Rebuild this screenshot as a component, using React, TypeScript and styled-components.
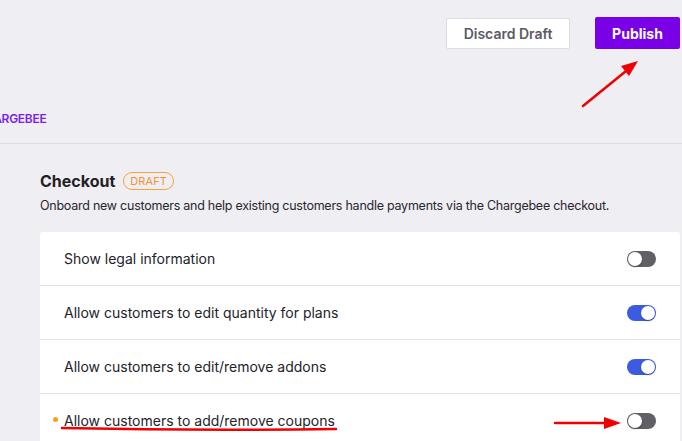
import React, { useState } from 'react';
import styled, { createGlobalStyle } from 'styled-components';

const GlobalStyle = createGlobalStyle`
  html, body {
    margin: 0;
    padding: 0;
    background: #efeef3;
    font-family: Inter, "Open Sans", "Liberation Sans", sans-serif;
    color: #1f1f24;
    overflow: hidden;
  }
`;

interface iSetting {
  label: string;
  on: boolean;
  changed?: boolean;
}

const settings: iSetting[] = [
  { label: 'Show legal information', on: false },
  { label: 'Allow customers to edit quantity for plans', on: true },
  { label: 'Allow customers to edit/remove addons', on: true },
  { label: 'Allow customers to add/remove coupons', on: false, changed: true },
];

function App() {
  const [items, setItems] = useState<iSetting[]>(settings);

  const handleToggle = (idx: number) => {
    setItems(items.map((it, i) => (i === idx ? { ...it, on: !it.on } : it)));
  };

  return (
    <Page>
      <GlobalStyle />
      <Header>
        <Actions>
          <DiscardButton type="button">Discard Draft</DiscardButton>
          <PublishButton type="button">Publish</PublishButton>
        </Actions>
        <Breadcrumb>CHARGEBEE</Breadcrumb>
      </Header>
      <Content>
        <TitleRow>
          <Title>Checkout</Title>
          <Badge>DRAFT</Badge>
        </TitleRow>
        <Description>
          Onboard new customers and help existing customers handle payments via the Chargebee checkout.
        </Description>
        <Card>
          {items.map((it, idx) => (
            <Row key={it.label}>
              <Label>
                {it.changed && <Dot />}
                {it.label}
              </Label>
              <Toggle $on={it.on} onClick={() => handleToggle(idx)} />
            </Row>
          ))}
        </Card>
      </Content>
      {/* 빨간 주석 */}
      <Annotations width="682" height="441" viewBox="0 0 682 441">
        <line x1="583" y1="106" x2="626" y2="71" stroke="#f00000" strokeWidth="2.5" strokeLinecap="round" />
        <polygon points="638,61 621,66 629,76" fill="#f00000" />
        <path d="M62 428 Q200 431 336 429" stroke="#f00000" strokeWidth="2.5" fill="none" strokeLinecap="round" />
        <line x1="555" y1="423" x2="608" y2="423" stroke="#f00000" strokeWidth="2.5" strokeLinecap="round" />
        <polygon points="621,423 604,417 604,429" fill="#f00000" />
      </Annotations>
    </Page>
  );
}

const Page = styled.div`
  position: relative;
  width: 682px;
  height: 441px;
  overflow: hidden;
`;

const Header = styled.div`
  height: 143px;
  border-bottom: 1px solid #dcdbe0;
  display: flex;
  flex-direction: column;
`;

const Actions = styled.div`
  display: flex;
  justify-content: flex-end;
  gap: 25px;
  padding: 18px 2px 0 0;
`;

const DiscardButton = styled.button`
  width: 124px;
  height: 31px;
  background: #ffffff;
  border: 1px solid #dddce2;
  border-radius: 2px;
  color: #5b5b62;
  font-family: inherit;
  font-size: 14px;
  font-weight: 600;
  cursor: pointer;
`;

const PublishButton = styled.button`
  width: 85px;
  height: 32px;
  margin-top: -1px;
  background: #7a00e8;
  border: 0;
  border-radius: 2px;
  color: #ffffff;
  font-family: inherit;
  font-size: 14px;
  font-weight: 700;
  cursor: pointer;
`;

const Breadcrumb = styled.div`
  margin-top: 62px;
  margin-left: -24px;
  color: #7a1fe6;
  font-size: 12px;
  font-weight: 600;
  letter-spacing: -0.3px;
`;

const Content = styled.div`
  padding: 27px 2px 0 40px;
`;

const TitleRow = styled.div`
  display: flex;
  align-items: center;
  gap: 8px;
`;

const Title = styled.h1`
  margin: 0;
  font-size: 16px;
  font-weight: 700;
  color: #1f1f24;
`;

const Badge = styled.span`
  border: 1px solid #f5a33b;
  border-radius: 10px;
  padding: 1px 6px;
  color: #f5903b;
  font-size: 11px;
  letter-spacing: 0.1px;
`;

const Description = styled.p`
  margin: 7px 0 0;
  font-size: 12.5px;
  letter-spacing: -0.25px;
  color: #27272d;
`;

const Card = styled.div`
  margin-top: 19px;
  background: #ffffff;
  border-radius: 3px;
`;

const Row = styled.div`
  display: flex;
  align-items: center;
  justify-content: space-between;
  height: 53px;
  padding: 0 24px;
  border-bottom: 1px solid #e2e1e6;
`;

const Label = styled.div`
  position: relative;
  font-size: 14px;
  color: #23232a;
`;

const Dot = styled.span`
  position: absolute;
  left: -11px;
  top: 5px;
  width: 5px;
  height: 5px;
  border-radius: 50%;
  background: #f5a020;
`;

const Toggle = styled.div<{ $on: boolean }>`
  position: relative;
  width: 29px;
  height: 16px;
  border-radius: 8px;
  background: ${(p) => (p.$on ? '#3d5be0' : '#606066')};
  cursor: pointer;
  &::after {
    content: '';
    position: absolute;
    top: 1px;
    left: ${(p) => (p.$on ? '14px' : '1px')};
    width: 14px;
    height: 14px;
    border-radius: 50%;
    background: #ffffff;
    box-shadow: 0 1px 2px rgba(0, 0, 0, 0.3);
  }
`;

const Annotations = styled.svg`
  position: absolute;
  top: 0;
  left: 0;
  pointer-events: none;
`;

export default App;
